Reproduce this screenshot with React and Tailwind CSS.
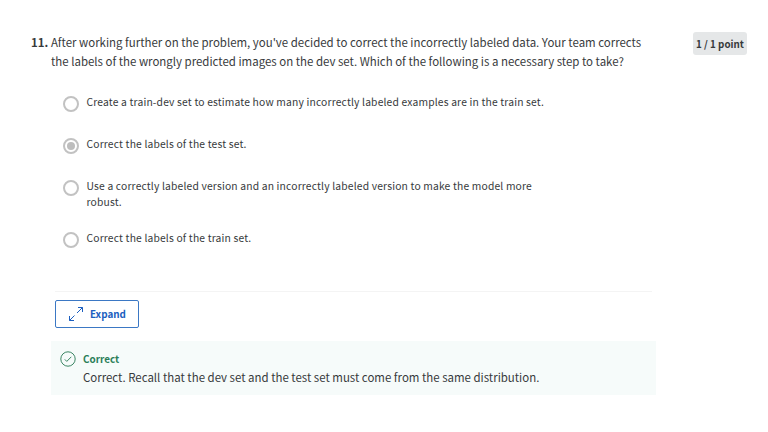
const options = [
  { lines: ["Create a train-dev set to estimate how many incorrectly labeled examples are in the train set."], gap: "mb-[24px]" },
  { lines: ["Correct the labels of the test set."], checked: true, gap: "mb-[24px]" },
  { lines: ["Use a correctly labeled version and an incorrectly labeled version to make the model more", "robust."], gap: "mb-[20px]" },
  { lines: ["Correct the labels of the train set."], gap: "" },
];

function Radio({ checked }) {
  return (
    <span className="mt-[2px] flex size-4 shrink-0 items-center justify-center rounded-full border-2 border-[#c2c2c2] bg-white">
      {checked && <span className="size-2 rounded-full bg-[#bdbdbd]" />}
    </span>
  );
}

export default function App() {
  return (
    <main className="h-[432px] w-[768px] overflow-hidden bg-white pl-[31px] pt-[32px] font-['Noto_Sans_CJK_SC','Noto_Sans',sans-serif] text-[#373a3c]">
      <header className="flex items-start">
        <h2 className="mt-px flex whitespace-nowrap text-[11.46px] leading-[19px]">
          <span className="w-[20px] shrink-0 font-bold">11.</span>
          <span className="w-[642px] shrink-0">
            <span className="block">After working further on the problem, you've decided to correct the incorrectly labeled data. Your team corrects</span>
            <span className="block">the labels of the wrongly predicted images on the dev set. Which of the following is a necessary step to take?</span>
          </span>
        </h2>
        <div className="flex h-[23px] w-[54px] shrink-0 items-center justify-center whitespace-nowrap rounded-[3px] bg-[#e5e7e8] text-[9.8px] font-bold leading-4">1 / 1 point</div>
      </header>

      <ul className="ml-[32px] mt-[23px]">
        {options.map((o) => (
          <li key={o.lines[0]} className={"flex gap-[7.5px] whitespace-nowrap text-[10.3px] leading-4 tracking-[0.17px] " + o.gap}>
            <Radio checked={o.checked} />
            <span>
              {o.lines.map((line) => (
                <span key={line} className="block">{line}</span>
              ))}
            </span>
          </li>
        ))}
      </ul>

      <hr className="ml-[24px] mt-[43px] w-[597px] border-[#f4f4f4]" />

      <button className="ml-[24px] mt-[8px] flex h-[28px] w-[84px] items-center rounded-[2px] border border-[#3b78c4] pl-[12px] text-[9.9px] font-bold leading-4 text-[#1c5fc0]">
        <svg className="mr-[6px] size-4" viewBox="0 0 16 16" fill="none" stroke="currentColor" strokeWidth="1">
          <path d="M1.5 14.5 6.5 9.5M9 7 14.5 1.5M10 1.5h4.5V6M1.5 10v4.5H6" />
        </svg>
        Expand
      </button>

      <section className="ml-[20px] mt-[13px] flex h-[54px] w-[605px] gap-[7px] bg-[#f6fbfa] pl-[9px] pt-[10px]">
        <svg className="size-4 shrink-0" viewBox="0 0 16 16" fill="none" stroke="#3b8664" strokeWidth="1">
          <circle cx="8" cy="8" r="7.2" />
          <path d="m4.8 8.4 2 2 4.5-4.6" />
        </svg>
        <div className="whitespace-nowrap">
          <h3 className="text-[9.9px] font-bold leading-[17px] text-[#2c7f59]">Correct</h3>
          <p className="text-[11.46px] leading-[18px]">Correct. Recall that the dev set and the test set must come from the same distribution.</p>
        </div>
      </section>
    </main>
  );
}
